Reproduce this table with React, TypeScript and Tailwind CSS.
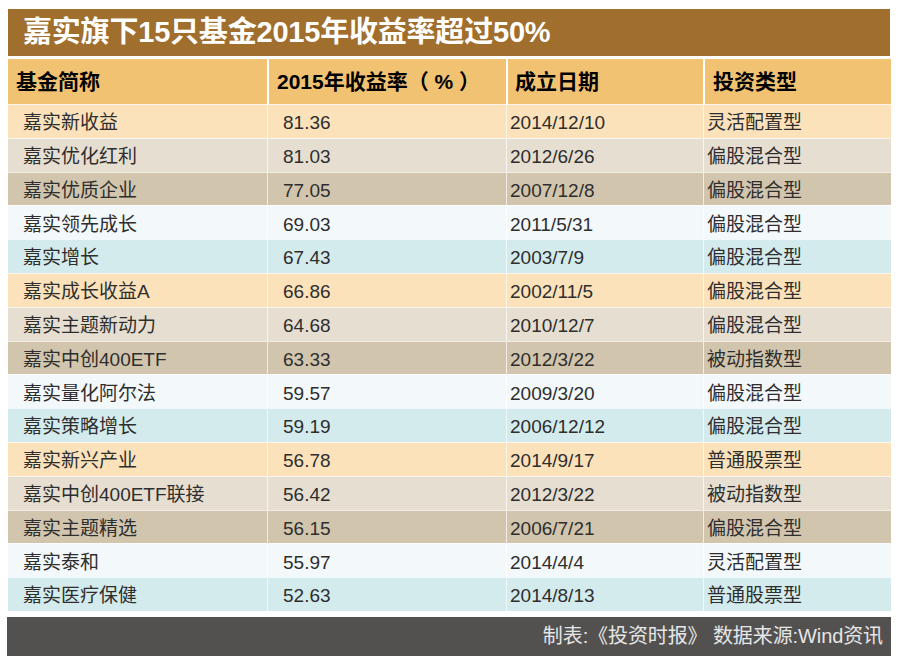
const rows = [
  ['嘉实新收益', '81.36', '2014/12/10', '灵活配置型'],
  ['嘉实优化红利', '81.03', '2012/6/26', '偏股混合型'],
  ['嘉实优质企业', '77.05', '2007/12/8', '偏股混合型'],
  ['嘉实领先成长', '69.03', '2011/5/31', '偏股混合型'],
  ['嘉实增长', '67.43', '2003/7/9', '偏股混合型'],
  ['嘉实成长收益A', '66.86', '2002/11/5', '偏股混合型'],
  ['嘉实主题新动力', '64.68', '2010/12/7', '偏股混合型'],
  ['嘉实中创400ETF', '63.33', '2012/3/22', '被动指数型'],
  ['嘉实量化阿尔法', '59.57', '2009/3/20', '偏股混合型'],
  ['嘉实策略增长', '59.19', '2006/12/12', '偏股混合型'],
  ['嘉实新兴产业', '56.78', '2014/9/17', '普通股票型'],
  ['嘉实中创400ETF联接', '56.42', '2012/3/22', '被动指数型'],
  ['嘉实主题精选', '56.15', '2006/7/21', '偏股混合型'],
  ['嘉实泰和', '55.97', '2014/4/4', '灵活配置型'],
  ['嘉实医疗保健', '52.63', '2014/8/13', '普通股票型'],
]

// row colours repeat every five rows
const bands = ['bg-[#fbe2bb]', 'bg-[#e6dfd1]', 'bg-[#d2c5ad]', 'bg-[#f3f8fb]', 'bg-[#d4ebed]']

const font = "font-['Liberation_Sans','Noto_Sans_CJK_SC',sans-serif]"

export default function App() {
  return (
    <div className={`w-[899px] h-[664px] bg-white pt-[9px] pl-[8px] ${font}`}>
      {/* Title */}
      <div className="w-[882px] h-[47px] bg-[#a06e2d] flex items-center pl-[15px]">
        <h1 className="text-[29px] font-bold text-white leading-none tracking-[-0.2px]">
          嘉实旗下15只基金2015年收益率超过50%
        </h1>
      </div>

      {/* Table */}
      <div className="mt-[3px] w-[883px]">
        <div className="grid grid-cols-[259px_239px_197px_188px] h-[45px] bg-[#f2c273] text-[21px] font-bold text-black">
          <div className="flex items-center pl-[8px]">基金简称</div>
          <div className="flex items-center pl-[8px] border-l-2 border-white">2015年收益率（ % ）</div>
          <div className="flex items-center pl-[7px] border-l-2 border-white">成立日期</div>
          <div className="flex items-center pl-[8px] border-l-2 border-white">投资类型</div>
        </div>
        {rows.map((r, i) => (
          <div
            key={i}
            className={`grid grid-cols-[259px_239px_197px_188px] h-[33.8px] border-t border-white/70 text-[19px] text-[#2e2e2e] ${bands[i % 5]}`}
          >
            <div className="flex items-center pl-[15px] pt-[4px]">{r[0]}</div>
            <div className="flex items-center pl-[15px] pt-[4px] border-l border-white/70">{r[1]}</div>
            <div className="flex items-center pl-[3px] pt-[4px] border-l border-white/70">{r[2]}</div>
            <div className="flex items-center pl-[3px] pt-[4px] border-l border-white/70">{r[3]}</div>
          </div>
        ))}
      </div>

      {/* Source */}
      <div className="mt-[6px] w-[884px] -ml-[1px] h-[39px] bg-[#535150] flex items-center justify-end pr-[8px]">
        <p className="text-[20px] text-[#e6e6e6] tracking-[-0.1px]">制表:《投资时报》 数据来源:Wind资讯</p>
      </div>
    </div>
  )
}
